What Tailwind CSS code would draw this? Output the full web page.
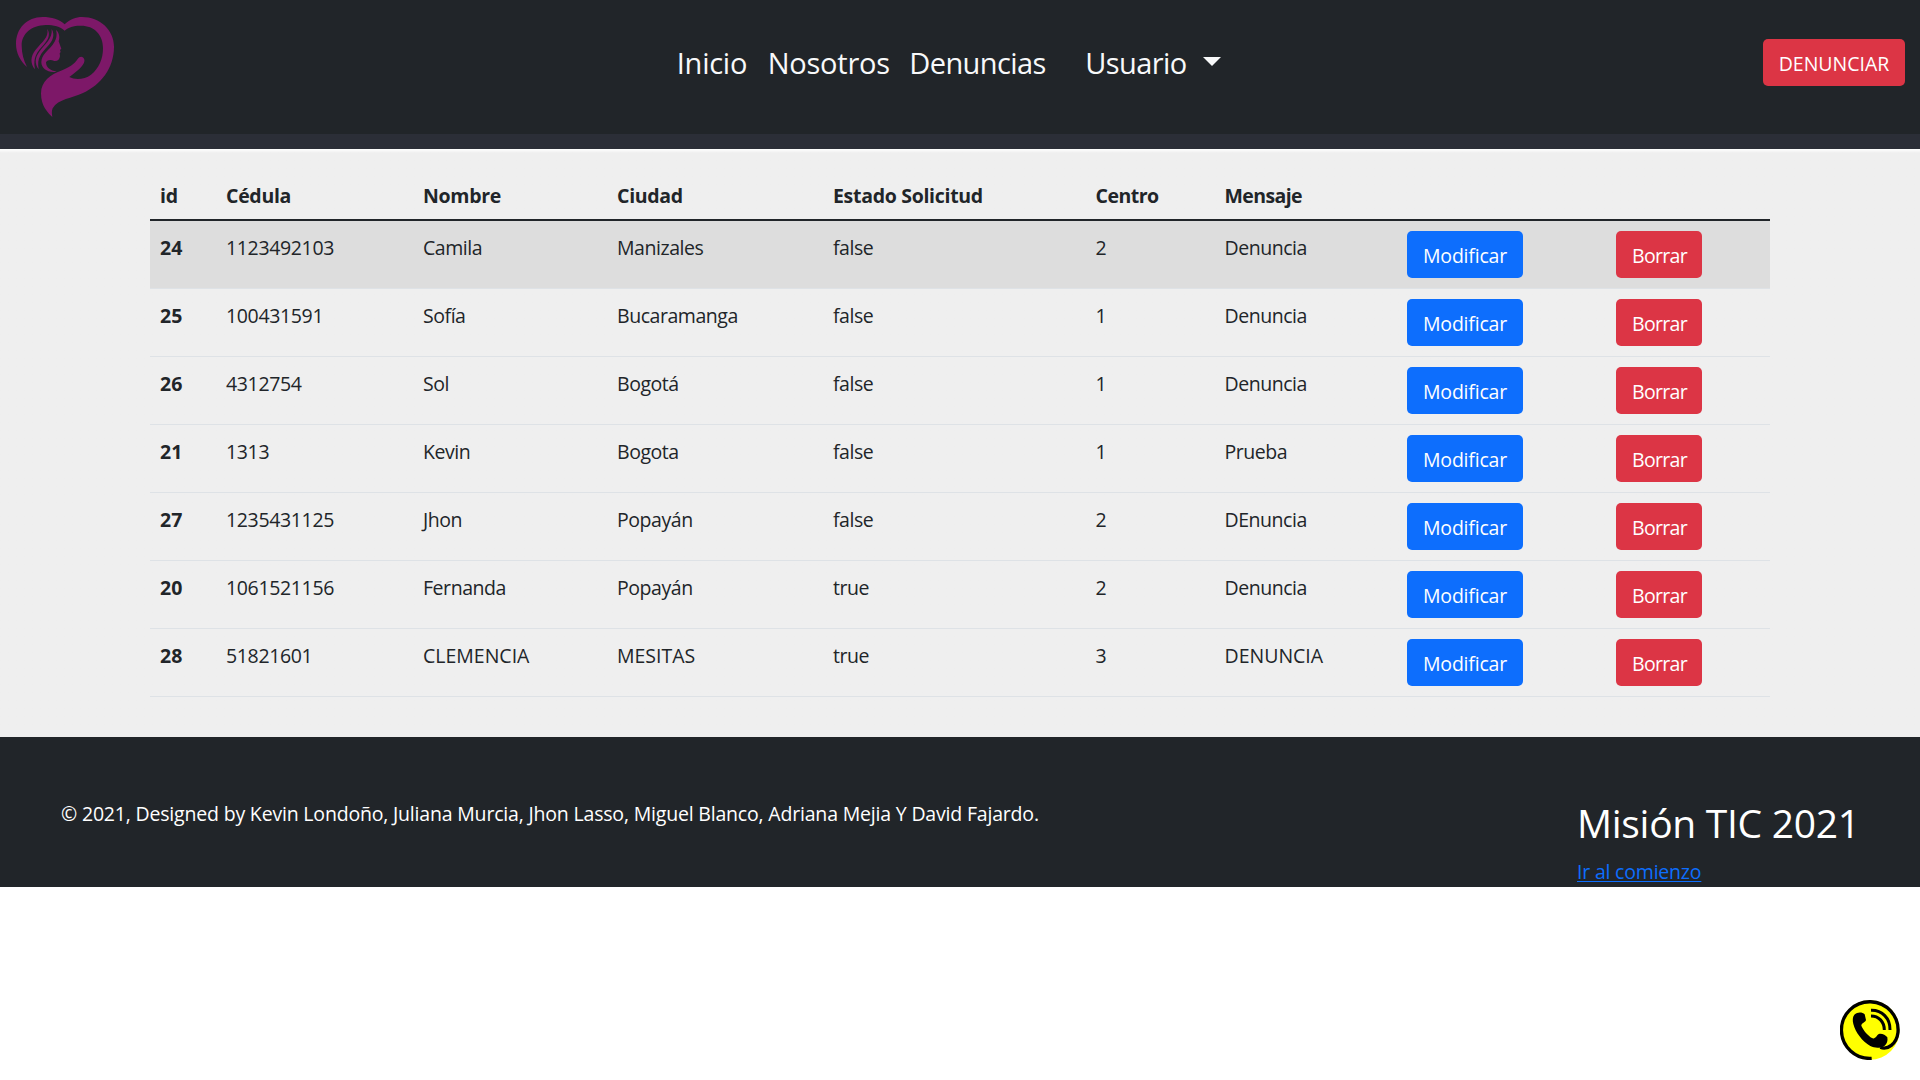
<!DOCTYPE html>
<html lang="es">
<head>
<meta charset="utf-8">
<title>Denuncias</title>
<script src="https://cdn.jsdelivr.net/npm/@tailwindcss/browser@4"></script>
</head>
<body class="bg-white font-['Open_Sans',sans-serif] text-[19.5px] leading-[30px] tracking-[-0.2px] text-[#212529]">
<header class="flex h-[134px] items-start justify-between bg-[#212529]">
  <svg class="h-[134px] w-[130px] shrink-0" viewBox="0 0 390 402" fill="#7d1868">
    <path d="M81 201C61 182 48 160 48 131C48 86 80 51 128 51C155 51 178 57 194 73C210 57 228 51 246 51C300 51 342 90 342 140C342 205 302 254 249 279C216 295 175 296 158 325C154 334 156 343 157 351C143 338 123 318 123 280C123 243 153 222 183 212C207 203 222 193 233 177C239 169 245 169 250 173C257 180 252 190 246 198C236 211 223 219 208 231C225 240 253 239 273 224C297 205 309 177 309 144C309 103 282 76 241 77C219 77 206 82 194 92C180 79 162 75 138 75C93 76 65 102 65 136C65 161 71 181 81 201Z"/>
    <path d="M168 90C178 98 180 112 176 124L184 146L180 150L182 156L179 160L180 168C179 178 173 184 163 183C152 178 143 179 138 187C138 202 151 212 170 215C145 220 124 206 124 187C124 164 144 152 158 134C170 119 172 104 168 90Z"/>
    <path d="M142 87C152 103 145 119 131 134C112 155 98 170 105 208C90 191 91 168 107 149C126 126 147 112 142 87Z"/>
    <path d="M155 87C166 106 158 123 143 139C124 160 110 174 116 208C103 190 105 172 118 155C136 131 158 116 155 87Z"/>
  </svg>
  <nav class="-mr-[5px] flex pt-10 text-[29px] leading-[45px] tracking-[-0.25px] text-[#f8f9fa]">
    <a class="w-[91px]">Inicio</a>
    <a class="w-[141.5px]">Nosotros</a>
    <a class="w-[176px] tracking-[-0.6px]">Denuncias</a>
    <a class="w-[118px] tracking-[-0.6px]">Usuario</a>
    <svg class="mt-[17px] h-[9px] w-[18px]" viewBox="0 0 18 9" fill="currentColor"><path d="M0 0H18L9 9Z"/></svg>
  </nav>
  <button class="mt-[39px] mr-[15px] h-[47px] w-[142px] rounded-[5px] bg-[#dc3545] pt-0.5 tracking-normal text-white">DENUNCIAR</button>
</header>
<div class="h-[15px] bg-[#2b2e37]"></div>
<main class="h-[588px] bg-[#efefef] bg-linear-to-b from-white to-[#efefef] to-[4px] px-[150px] pt-5">
  <table class="w-[1620px] table-fixed border-separate border-spacing-0 text-left">
    <colgroup>
      <col class="w-[66px]"><col class="w-[197px]"><col class="w-[194px]"><col class="w-[216px]"><col class="w-[262.5px]"><col class="w-[129px]"><col class="w-[182.5px]"><col class="w-[209px]"><col class="w-[164px]">
    </colgroup>
    <thead>
      <tr class="align-top font-bold tracking-[-0.3px] [&>th]:h-[52px] [&>th]:border-b-2 [&>th]:border-[#212529] [&>th]:px-2.5 [&>th]:pt-3 [&>th]:pb-2">
        <th>id</th><th>Cédula</th><th>Nombre</th><th>Ciudad</th><th>Estado Solicitud</th><th class="tracking-[-0.5px]">Centro</th><th class="tracking-[-0.6px]">Mensaje</th><th></th><th></th>
      </tr>
    </thead>
    <tbody id="rows"></tbody>
  </table>
</main>
<footer class="flex h-[150px] justify-between bg-[#212529] pr-[61px] pl-[61px] text-white">
  <p class="pt-[62px] tracking-[-0.185px]">© 2021, Designed by Kevin Londoño, Juliana Murcia, Jhon Lasso, Miguel Blanco, Adriana Mejia Y David Fajardo.</p>
  <div class="w-[282px] pt-[62px]">
    <h2 class="text-[39px] leading-[48px] tracking-[-0.3px] whitespace-nowrap">Misión TIC 2021</h2>
    <a class="mt-[10px] block text-[#0d6efd] underline decoration-1 underline-offset-2">Ir al comienzo</a>
  </div>
</footer>
<a class="fixed right-5 bottom-5 block size-[60px]">
  <svg class="size-[60px]" viewBox="0 0 180 180">
    <circle cx="90" cy="90" r="89" fill="#ff0"/>
    <path d="M95 175A85 85 0 1 1 174 97C170 132 142 151 121 142" fill="none" stroke="#000" stroke-width="10"/>
    <path d="M43 44C53 35 67 36 74 43L78 60C77 66 64 70 64 77C70 91 84 108 98 115C105 119 112 103 117 102C126 100 137 106 142 112C144 122 141 132 134 137C122 145 105 145 91 138C66 123 47 98 40 72C37 60 38 50 43 44Z"/>
    <path d="M93 31C126 30 151 55 150 90M93 48C116 48 133 65 133 90" fill="none" stroke="#000" stroke-width="9"/>
  </svg>
</a>
<script>
const rows = [
  ['24','1123492103','Camila','Manizales','false','2','Denuncia'],
  ['25','100431591','Sofía','Bucaramanga','false','1','Denuncia'],
  ['26','4312754','Sol','Bogotá','false','1','Denuncia'],
  ['21','1313','Kevin','Bogota','false','1','Prueba'],
  ['27','1235431125','Jhon','Popayán','false','2','DEnuncia'],
  ['20','1061521156','Fernanda','Popayán','true','2','Denuncia'],
  ['28','51821601','CLEMENCIA','MESITAS','true','3','DENUNCIA']
];
const spacing = c => c.length > 3 && c === c.toUpperCase() ? 'tracking-normal' : 'tracking-[-0.45px]';
document.getElementById('rows').innerHTML = rows.map((r, i) => `
  <tr class="align-top [&>*]:h-[68px] [&>*]:border-b [&>*]:border-[#dee2e6] [&>*]:px-2.5 ${i ? '' : 'bg-[#dddddd]'}">
    <th class="pt-3 font-bold tracking-normal">${r[0]}</th>
    <td class="pt-3 tracking-[-0.35px]">${r[1]}</td>
    ${r.slice(2).map(c => `<td class="pt-3 ${spacing(c)}">${c}</td>`).join('')}
    <td class="pt-2.5"><button class="block h-[47px] w-[116px] rounded-[5px] bg-[#0d6efd] pt-[3px] text-white">Modificar</button></td>
    <td class="pt-2.5"><button class="block h-[47px] w-[86px] rounded-[5px] bg-[#dc3545] pt-[3px] pl-px tracking-[-0.7px] text-white">Borrar</button></td>
  </tr>`).join('');
</script>
</body>
</html>
